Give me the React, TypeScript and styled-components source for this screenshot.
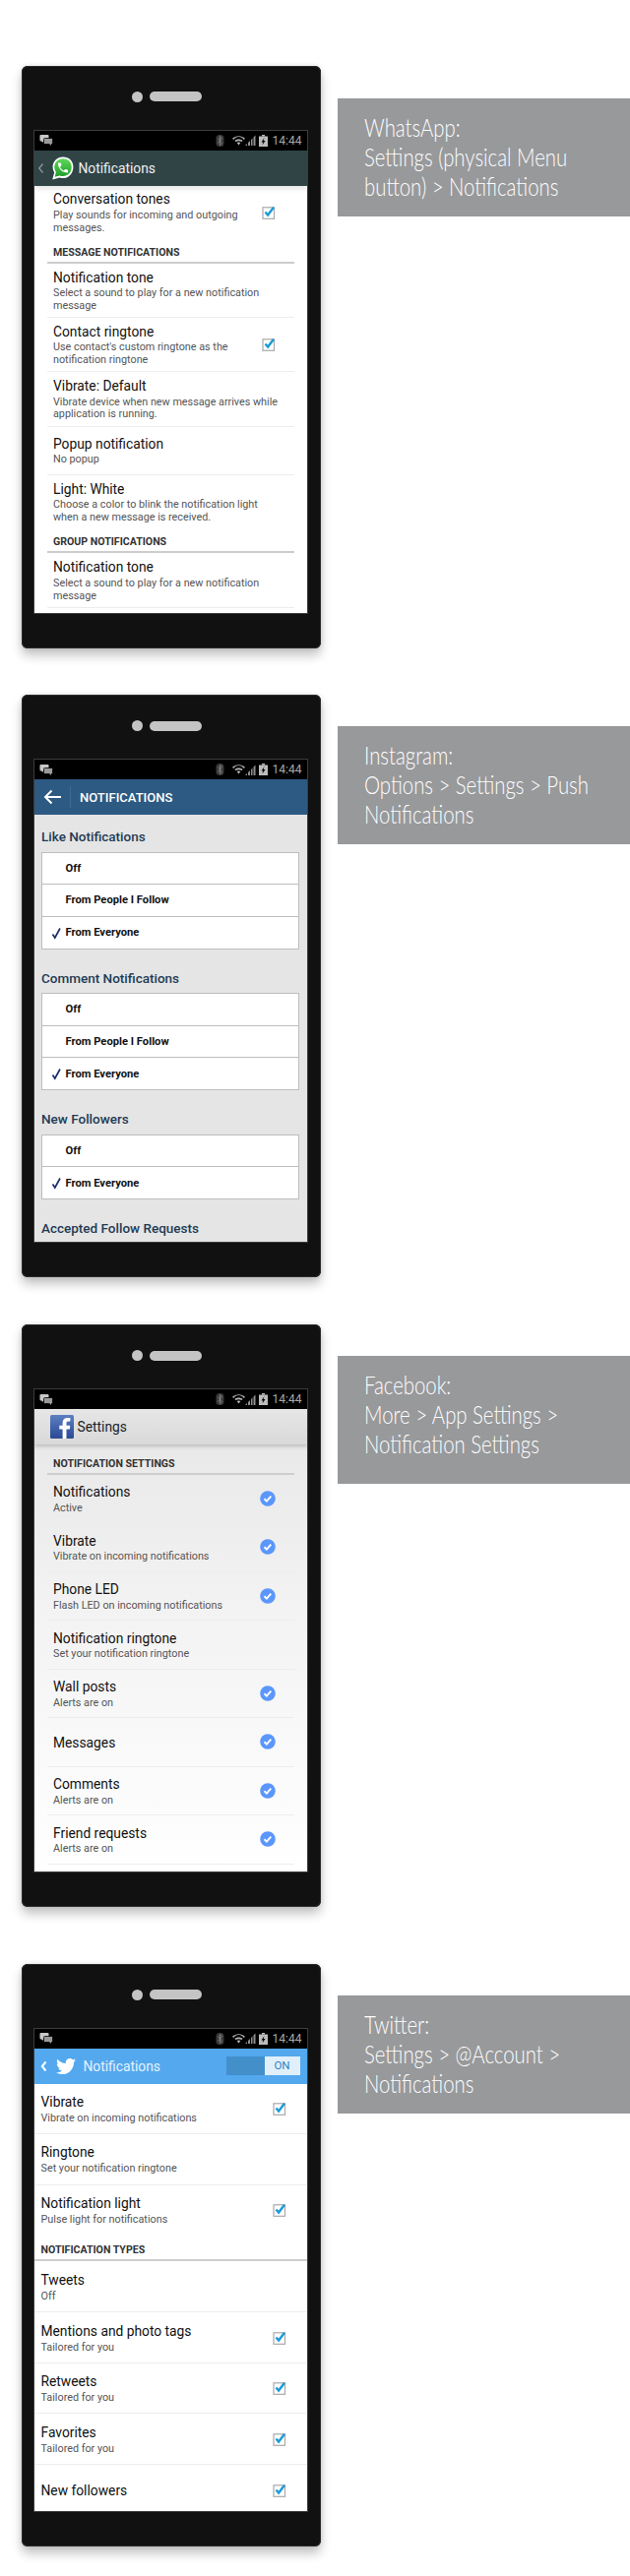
import React from "react";
import styled, { createGlobalStyle } from "styled-components";
import { FaTwitter } from "react-icons/fa";

const Global = createGlobalStyle`
  html, body { margin: 0; padding: 0; background: #fff; }
  body { font-family: Roboto, "Liberation Sans", sans-serif; }
`;

const Page = styled.div`
  width: 640px;
  height: 2618px;
  padding-top: 66.5px;
  box-sizing: border-box;
  overflow: hidden;
`;
const Section = styled.section<{ $mb: number }>`
  display: flex;
  align-items: flex-start;
  padding-left: 21.5px;
  margin-bottom: ${(p) => p.$mb}px;
`;
const Phone = styled.div`
  width: 304px;
  height: 592px;
  flex: none;
  box-sizing: border-box;
  padding: 66px 13.5px 0 13px;
  background: #111;
  border-radius: 6px;
  box-shadow: inset 0 0 0 1px #2b2b2b, 0 7px 11px rgba(0, 0, 0, 0.24), 0 0 5px rgba(0, 0, 0, 0.1);
`;
const Earpiece = styled.div`
  display: flex;
  justify-content: center;
  align-items: center;
  gap: 7px;
  height: 11px;
  margin: -40px 8px 29px 0;
`;
const Camera = styled.span`
  width: 11px;
  height: 11px;
  border-radius: 50%;
  background: #c4c4c4;
`;
const Speaker = styled.span`
  width: 53px;
  height: 10px;
  border-radius: 5px;
  background: #c4c4c4;
`;
const Screen = styled.div<{ $bg: string }>`
  height: 490px;
  width: 277px;
  background: ${(p) => p.$bg};
  overflow: hidden;
  display: flex;
  flex-direction: column;
  outline: 1px solid #3c3c3c;
`;
const StatusBar = styled.div`
  flex: none;
  height: 20px;
  background: #000;
  display: flex;
  align-items: center;
  padding: 0 5px 0 5.5px;
  box-sizing: border-box;
`;
const StatusRight = styled.div`
  margin-left: auto;
  display: flex;
  align-items: center;
`;
const Clock = styled.span`
  font-size: 12px;
  color: #a8a8a8;
  margin-left: 5px;
  width: 30px;
  line-height: 14px;
`;
const AppBar = styled.header<{ $bg: string; $shadow?: string }>`
  flex: none;
  height: 36px;
  background: ${(p) => p.$bg};
  box-shadow: ${(p) => p.$shadow || "none"};
  display: flex;
  align-items: center;
  position: relative;
`;
const BarTitle = styled.span<{ $color: string; $ml: number }>`
  font-size: 13.8px;
  color: ${(p) => p.$color};
  margin-left: ${(p) => p.$ml}px;
`;
const IgTitle = styled.span`
  font-size: 13px;
  font-weight: 500;
  color: #fff;
  margin-left: 9px;
`;
const IgDivider = styled.span`
  width: 1px;
  height: 22px;
  margin-left: 8px;
  background: #3f6c94;
`;
const Toggle = styled.div`
  margin-left: auto;
  margin-right: 7px;
  width: 75px;
  height: 18.5px;
  display: flex;
  background: #438fca;
`;
const ToggleOn = styled.span`
  margin-left: auto;
  width: 36px;
  background: #e1effb;
  color: #2f7fbe;
  font-size: 11.5px;
  line-height: 18.5px;
  text-align: center;
`;
const Row = styled.div<{ $h: number; $full?: boolean; $line?: boolean }>`
  flex: none;
  height: ${(p) => p.$h}px;
  box-sizing: border-box;
  margin: ${(p) => (p.$full ? "0" : "0 13px 0 13.5px")};
  padding: ${(p) => (p.$full ? "0 20.5px 0 7px" : "0 19px 0 6px")};
  border-bottom: ${(p) => (p.$line ? "1px solid #ededed" : "0")};
  display: flex;
  align-items: center;
  justify-content: space-between;
`;
const RowText = styled.div`
  display: flex;
  flex-direction: column;
  padding-top: 1.5px;
`;
const Title = styled.div`
  font-size: 13.8px;
  line-height: 17px;
  color: #111;
  white-space: nowrap;
`;
const Sub = styled.div<{ $gap: number }>`
  font-size: 10.8px;
  line-height: 12.7px;
  color: #555;
  white-space: pre;
  margin-top: ${(p) => p.$gap}px;
`;
const GroupHead = styled.div<{ $h: number; $full?: boolean }>`
  flex: none;
  height: ${(p) => p.$h}px;
  box-sizing: border-box;
  margin: ${(p) => (p.$full ? "0" : "0 13px 0 13.5px")};
  padding: 0 0 3px ${(p) => (p.$full ? 7 : 6)}px;
  border-bottom: 2px solid #cdcdcd;
  display: flex;
  align-items: flex-end;
  font-size: 10.6px;
  line-height: 12px;
  font-weight: 700;
  color: #333;
`;
const IgBody = styled.div`
  padding: 14px 7.5px 0 7.5px;
`;
const IgHead = styled.div`
  font-size: 13.5px;
  line-height: 16px;
  font-weight: 500;
  color: #1f3b55;
  margin-bottom: 7.5px;
`;
const IgBox = styled.div`
  background: #fff;
  border: 1px solid #bdbdbd;
  margin-bottom: 21px;
`;
const IgOption = styled.div`
  height: 32.5px;
  box-sizing: border-box;
  border-bottom: 1px solid #bdbdbd;
  display: flex;
  align-items: center;
  font-size: 11.2px;
  font-weight: 700;
  color: #111;
  position: relative;
  padding-left: 23.5px;
  &:last-child { border-bottom: 0; height: 32px; }
`;
const IgTick = styled.svg`
  position: absolute;
  left: 9px;
  top: 10px;
`;
const FbBody = styled.div`
  flex: 1;
  background: linear-gradient(#e9e9e9 0%, #f3f3f3 40%, #ffffff 100%);
`;
const Banner = styled.aside<{ $h: number; $mt: number }>`
  flex: 1;
  margin: ${(p) => p.$mt}px 0 0 17.5px;
  height: ${(p) => p.$h}px;
  box-sizing: border-box;
  background: #98999b;
  padding: 15px 0 0 26.5px;
  overflow: hidden;
`;
const BannerText = styled.div`
  color: #fff;
  font-family: Lato, "Liberation Sans", sans-serif;
  font-weight: 300;
  font-size: 24.5px;
  line-height: 30px;
  white-space: pre;
  transform: scaleX(0.83);
  transform-origin: left top;
`;

const ChatIcon = () => (
  <svg width="14" height="11" viewBox="0 0 14 11">
    <rect x="0.5" y="0" width="9" height="6.5" rx="1" fill="#c9c9c9" />
    <path d="M2 6h2v2z" fill="#c9c9c9" />
    <rect x="4.5" y="3.5" width="9" height="6" rx="1" fill="#9a9a9a" stroke="#000" strokeWidth="0.8" />
    <path d="M10 9h2v2z" fill="#9a9a9a" />
  </svg>
);
const StatusIcons = () => (
  <StatusRight>
    <svg width="9" height="12" viewBox="0 0 9 12" style={{ marginRight: 8 }}>
      <rect x="0.5" y="0" width="8" height="12" rx="3.5" fill="#3a3a3a" />
      <path d="M2.5 3.5l4 5-2 2v-9l2 2-4 5" fill="none" stroke="#888" strokeWidth="0.8" />
    </svg>
    <svg width="13" height="10" viewBox="0 0 13 10">
      <path d="M0 2.8C3.5-.6 9.5-.6 13 2.8l-1.2 1.2C9-.0 4-.0 1.2 4z" fill="#b5b5b5" />
      <path d="M2.4 5C4.5 3 8.5 3 10.6 5L9.5 6.1C8 4.8 5 4.8 3.5 6.1z" fill="#b5b5b5" />
      <path d="M4.6 7C5.6 6.2 7.4 6.2 8.4 7L6.5 9.6z" fill="#b5b5b5" />
    </svg>
    <svg width="11" height="11" viewBox="0 0 11 11">
      <path d="M0 11L2 9v2zM3 11V8l2-2v5zM6 11V5l1.5-1.5V11zM8.5 11V2.5L10.5 0.5V11z" fill="#8e8e8e" />
    </svg>
    <svg width="9" height="12" viewBox="0 0 9 12" style={{ marginLeft: 3 }}>
      <rect x="3" y="0" width="3" height="1.5" fill="#bdbdbd" />
      <rect x="0" y="1.5" width="9" height="10.5" fill="#bdbdbd" />
      <path d="M5.5 3L2.5 7.5H4.3L3.5 10.5 6.5 6H4.7z" fill="#000" />
    </svg>
    <Clock>14:44</Clock>
  </StatusRight>
);
const Status = () => (
  <StatusBar>
    <ChatIcon />
    <StatusIcons />
  </StatusBar>
);
const Chevron = ({ color, w, ml }: { color: string; w: number; ml: number }) => (
  <svg width="7" height="12" viewBox="0 0 7 12" style={{ marginLeft: ml, flex: "none" }}>
    <path d="M5.5 1.5L1.8 6l3.7 4.5" fill="none" stroke={color} strokeWidth={w} />
  </svg>
);
const WhatsLogo = () => (
  <svg width="22" height="24" viewBox="0 0 22 24" style={{ marginLeft: 8, flex: "none" }}>
    <defs>
      <linearGradient id="wa" x1="0" y1="0" x2="0" y2="1">
        <stop offset="0" stopColor="#5fd95a" />
        <stop offset="1" stopColor="#1f9c2c" />
      </linearGradient>
    </defs>
    <path d="M11 .5C5 .5.6 5 .6 10.7c0 2 .6 3.9 1.6 5.5L.2 23.5l7.4-2c1 .4 2.2.6 3.4.6 6 0 10.4-5.1 10.4-11.4S17 .5 11 .5z" fill="#fff" />
    <path d="M11 2.2c-4.9 0-8.7 3.8-8.7 8.6 0 1.9.6 3.6 1.6 5l-1.2 4.9 5-1.3c1 .5 2.1.7 3.3.7 4.9 0 8.7-3.9 8.7-9.3S15.9 2.2 11 2.2z" fill="url(#wa)" />
    <g transform="translate(4.3 4.7) scale(.56)">
      <path d="M6.62 10.79c1.44 2.83 3.76 5.14 6.59 6.59l2.2-2.2c.27-.27.67-.36 1.02-.24 1.12.37 2.33.57 3.57.57.55 0 1 .45 1 1V20c0 .55-.45 1-1 1-9.39 0-17-7.61-17-17 0-.55.45-1 1-1h3.5c.55 0 1 .45 1 1 0 1.25.2 2.45.57 3.57.11.35.03.74-.25 1.02l-2.2 2.2z" fill="#fff" />
    </g>
  </svg>
);
const FbLogo = () => (
  <svg width="24" height="24" viewBox="0 0 24 24" style={{ marginLeft: 16.5, flex: "none" }}>
    <defs>
      <linearGradient id="fb" x1="0" y1="0" x2="0" y2="1">
        <stop offset="0" stopColor="#5d7fc2" />
        <stop offset="1" stopColor="#2a4a94" />
      </linearGradient>
    </defs>
    <rect width="24" height="24" rx="1.5" fill="url(#fb)" />
    <path d="M16.5 24v-9.5h3.3l.5-3.8h-3.8V8.3c0-1.1.3-1.8 1.9-1.8h2V3.1c-.4 0-1.6-.1-2.9-.1-2.9 0-4.9 1.8-4.9 5v2.7H9.3v3.8h3.3V24z" fill="#fff" />
  </svg>
);
const CheckBox = () => (
  <svg width="14" height="14" viewBox="0 0 14 14" style={{ flex: "none" }}>
    <rect x="1" y="1.8" width="11.5" height="11.5" fill="#fff" stroke="#a9a9a9" strokeWidth="1.2" />
    <path d="M3.5 6.5l2.6 3L12 1.8" fill="none" stroke="#1a9bd7" strokeWidth="2.4" />
  </svg>
);
const BlueTick = () => (
  <svg width="16" height="16" viewBox="0 0 16 16" style={{ flex: "none" }}>
    <circle cx="8" cy="8" r="7.8" fill="#5b97fb" />
    <path d="M4.5 8.3l2.4 2.3 4.4-4.9" fill="none" stroke="#fff" strokeWidth="1.9" />
  </svg>
);

type Item = { t: string; s?: string; h: number; line?: boolean; check?: boolean };
type Head = { head: string; h: number };

const ListRows = ({ items, full, tick, gap }: { items: (Item | Head)[]; full?: boolean; tick?: boolean; gap: number }) => (
  <>
    {items.map((it, i) =>
      "head" in it ? (
        <GroupHead key={i} $h={it.h} $full={full}>{it.head}</GroupHead>
      ) : (
        <Row key={i} $h={it.h} $full={full} $line={it.line}>
          <RowText>
            <Title>{it.t}</Title>
            {it.s && <Sub $gap={gap}>{it.s}</Sub>}
          </RowText>
          {it.check && (tick ? <BlueTick /> : <CheckBox />)}
        </Row>
      )
    )}
  </>
);

const Device = ({ children, bg }: { children: React.ReactNode; bg: string }) => (
  <Phone>
    <Earpiece>
      <Camera />
      <Speaker />
    </Earpiece>
    <Screen $bg={bg}>
      <Status />
      {children}
    </Screen>
  </Phone>
);

const whatsapp: (Item | Head)[] = [
  { t: "Conversation tones", s: "Play sounds for incoming and outgoing\nmessages.", h: 54, check: true },
  { head: "MESSAGE NOTIFICATIONS", h: 25.5 },
  { t: "Notification tone", s: "Select a sound to play for a new notification\nmessage", h: 55, line: true },
  { t: "Contact ringtone", s: "Use contact's custom ringtone as the\nnotification ringtone", h: 55, line: true, check: true },
  { t: "Vibrate: Default", s: "Vibrate device when new message arrives while\napplication is running.", h: 55.5, line: true },
  { t: "Popup notification", s: "No popup", h: 49.5, line: true },
  { t: "Light: White", s: "Choose a color to blink the notification light\nwhen a new message is received.", h: 54 },
  { head: "GROUP NOTIFICATIONS", h: 25 },
  { t: "Notification tone", s: "Select a sound to play for a new notification\nmessage", h: 56, line: true },
];
const facebook: (Item | Head)[] = [
  { head: "NOTIFICATION SETTINGS", h: 30.7 },
  { t: "Notifications", s: "Active", h: 49.5, line: true, check: true },
  { t: "Vibrate", s: "Vibrate on incoming notifications", h: 49.5, line: true, check: true },
  { t: "Phone LED", s: "Flash LED on incoming notifications", h: 49.5, line: true, check: true },
  { t: "Notification ringtone", s: "Set your notification ringtone", h: 49.5, line: true },
  { t: "Wall posts", s: "Alerts are on", h: 49.5, line: true, check: true },
  { t: "Messages", h: 49.5, line: true, check: true },
  { t: "Comments", s: "Alerts are on", h: 49.5, line: true, check: true },
  { t: "Friend requests", s: "Alerts are on", h: 49.5, line: true, check: true },
];
const twitter: (Item | Head)[] = [
  { t: "Vibrate", s: "Vibrate on incoming notifications", h: 51.7, line: true, check: true },
  { t: "Ringtone", s: "Set your notification ringtone", h: 51.7, line: true },
  { t: "Notification light", s: "Pulse light for notifications", h: 51, check: true },
  { head: "NOTIFICATION TYPES", h: 26.6 },
  { t: "Tweets", s: "Off", h: 52, line: true },
  { t: "Mentions and photo tags", s: "Tailored for you", h: 52, line: true, check: true },
  { t: "Retweets", s: "Tailored for you", h: 51, line: true, check: true },
  { t: "Favorites", s: "Tailored for you", h: 51.7, line: true, check: true },
  { t: "New followers", h: 52, check: true },
];
const instagram: { head: string; options: string[] }[] = [
  { head: "Like Notifications", options: ["Off", "From People I Follow", "From Everyone"] },
  { head: "Comment Notifications", options: ["Off", "From People I Follow", "From Everyone"] },
  { head: "New Followers", options: ["Off", "From Everyone"] },
  { head: "Accepted Follow Requests", options: [] },
];

export default function App() {
  return (
    <Page>
      <Global />
      <Section $mb={47.5}>
        <Device bg="#fff">
          <AppBar $bg="#304446" $shadow="0 3px 5px rgba(0,0,0,.1)">
            <Chevron color="#8a9a9b" w={1.3} ml={3} />
            <WhatsLogo />
            <BarTitle $color="#f0f0f0" $ml={5}>Notifications</BarTitle>
          </AppBar>
          <ListRows items={whatsapp} gap={1.5} />
        </Device>
        <Banner $h={120} $mt={33.5}><BannerText>{"WhatsApp:\nSettings (physical Menu\nbutton) > Notifications"}</BannerText></Banner>
      </Section>
      <Section $mb={48}>
        <Device bg="#e5e5e5">
          <AppBar $bg="#2d5a82">
            <svg width="19" height="16" viewBox="0 0 19 16" style={{ marginLeft: 9.5, flex: "none" }}>
              <path d="M8.5 1.5L2 8l6.5 6.5M2.5 8H18" fill="none" stroke="#fff" strokeWidth="2" />
            </svg>
            <IgDivider />
            <IgTitle>NOTIFICATIONS</IgTitle>
          </AppBar>
          <IgBody>
            {instagram.map((g) => (
              <React.Fragment key={g.head}>
                <IgHead>{g.head}</IgHead>
                {g.options.length > 0 && (
                  <IgBox>
                    {g.options.map((o) => (
                      <IgOption key={o}>
                        {o === "From Everyone" && (
                          <IgTick width="11" height="13" viewBox="0 0 11 13">
                            <path d="M1.5 7.5l2.3 3.5L9 1.5" fill="none" stroke="#1d2f6f" strokeWidth="1.7" />
                          </IgTick>
                        )}
                        {o}
                      </IgOption>
                    ))}
                  </IgBox>
                )}
              </React.Fragment>
            ))}
          </IgBody>
        </Device>
        <Banner $h={120} $mt={32}><BannerText>{"Instagram:\nOptions > Settings > Push\nNotifications"}</BannerText></Banner>
      </Section>
      <Section $mb={57.5}>
        <Device bg="#fff">
          <AppBar $bg="linear-gradient(#e6e6e6,#d9d9d9)" $shadow="0 2px 4px rgba(0,0,0,.2)">
            <FbLogo />
            <BarTitle $color="#222" $ml={3.5}>Settings</BarTitle>
          </AppBar>
          <FbBody>
            <ListRows items={facebook} tick gap={1.5} />
          </FbBody>
        </Device>
        <Banner $h={130} $mt={32}><BannerText>{"Facebook:\nMore > App Settings >\nNotification Settings"}</BannerText></Banner>
      </Section>
      <Section $mb={0}>
        <Device bg="#fff">
          <AppBar $bg="#53a8ee">
            <Chevron color="#fff" w={2} ml={6.5} />
            <FaTwitter size={20} color="#fff" style={{ marginLeft: 9, flex: "none" }} />
            <BarTitle $color="#e4f2fe" $ml={7.5}>Notifications</BarTitle>
            <Toggle>
              <ToggleOn>ON</ToggleOn>
            </Toggle>
          </AppBar>
          <ListRows items={twitter} full gap={2} />
        </Device>
        <Banner $h={120} $mt={32}><BannerText>{"Twitter:\nSettings > @Account >\nNotifications"}</BannerText></Banner>
      </Section>
    </Page>
  );
}
